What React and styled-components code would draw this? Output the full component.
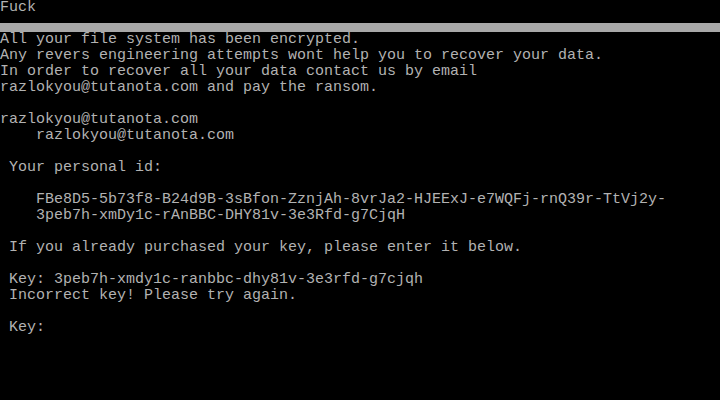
import styled, { createGlobalStyle } from "styled-components";

const GlobalStyle = createGlobalStyle`
  html, body {
    margin: 0;
    padding: 0;
    background: #000;
  }
`;

const Screen = styled.div`
  width: 720px;
  height: 400px;
  background: #000;
  color: #b2b2b2;
  font-family: "Liberation Mono", "DejaVu Sans Mono", monospace;
  font-size: 15px;
  line-height: 16px;
  overflow: hidden;
  display: flex;
  flex-direction: column;
`;

const Line = styled.div`
  height: 16px;
  white-space: pre;
  padding-left: ${(p) => (p.indent || 0) * 9}px;
`;

const Blank = styled.div`
  height: 16px;
`;

const Divider = styled.div`
  height: 9px;
  margin-top: 7px;
  background: #a8a8a8;
`;

const App = () => {
  return (
    <>
      <GlobalStyle />
      <Screen>
        <Line>Fuck</Line>
        <Divider />
        <Line>All your file system has been encrypted.</Line>
        <Line>Any revers engineering attempts wont help you to recover your data.</Line>
        <Line>In order to recover all your data contact us by email</Line>
        <Line>razlokyou@tutanota.com and pay the ransom.</Line>
        <Blank />
        <Line>razlokyou@tutanota.com</Line>
        <Line indent={4}>razlokyou@tutanota.com</Line>
        <Blank />
        <Line indent={1}>Your personal id:</Line>
        <Blank />
        <Line indent={4}>
          FBe8D5-5b73f8-B24d9B-3sBfon-ZznjAh-8vrJa2-HJEExJ-e7WQFj-rnQ39r-TtVj2y-
        </Line>
        <Line indent={4}>3peb7h-xmDy1c-rAnBBC-DHY81v-3e3Rfd-g7CjqH</Line>
        <Blank />
        <Line indent={1}>If you already purchased your key, please enter it below.</Line>
        <Blank />
        <Line indent={1}>Key: 3peb7h-xmdy1c-ranbbc-dhy81v-3e3rfd-g7cjqh</Line>
        <Line indent={1}>Incorrect key! Please try again.</Line>
        <Blank />
        <Line indent={1}>Key:</Line>
      </Screen>
    </>
  );
};

export default App;
